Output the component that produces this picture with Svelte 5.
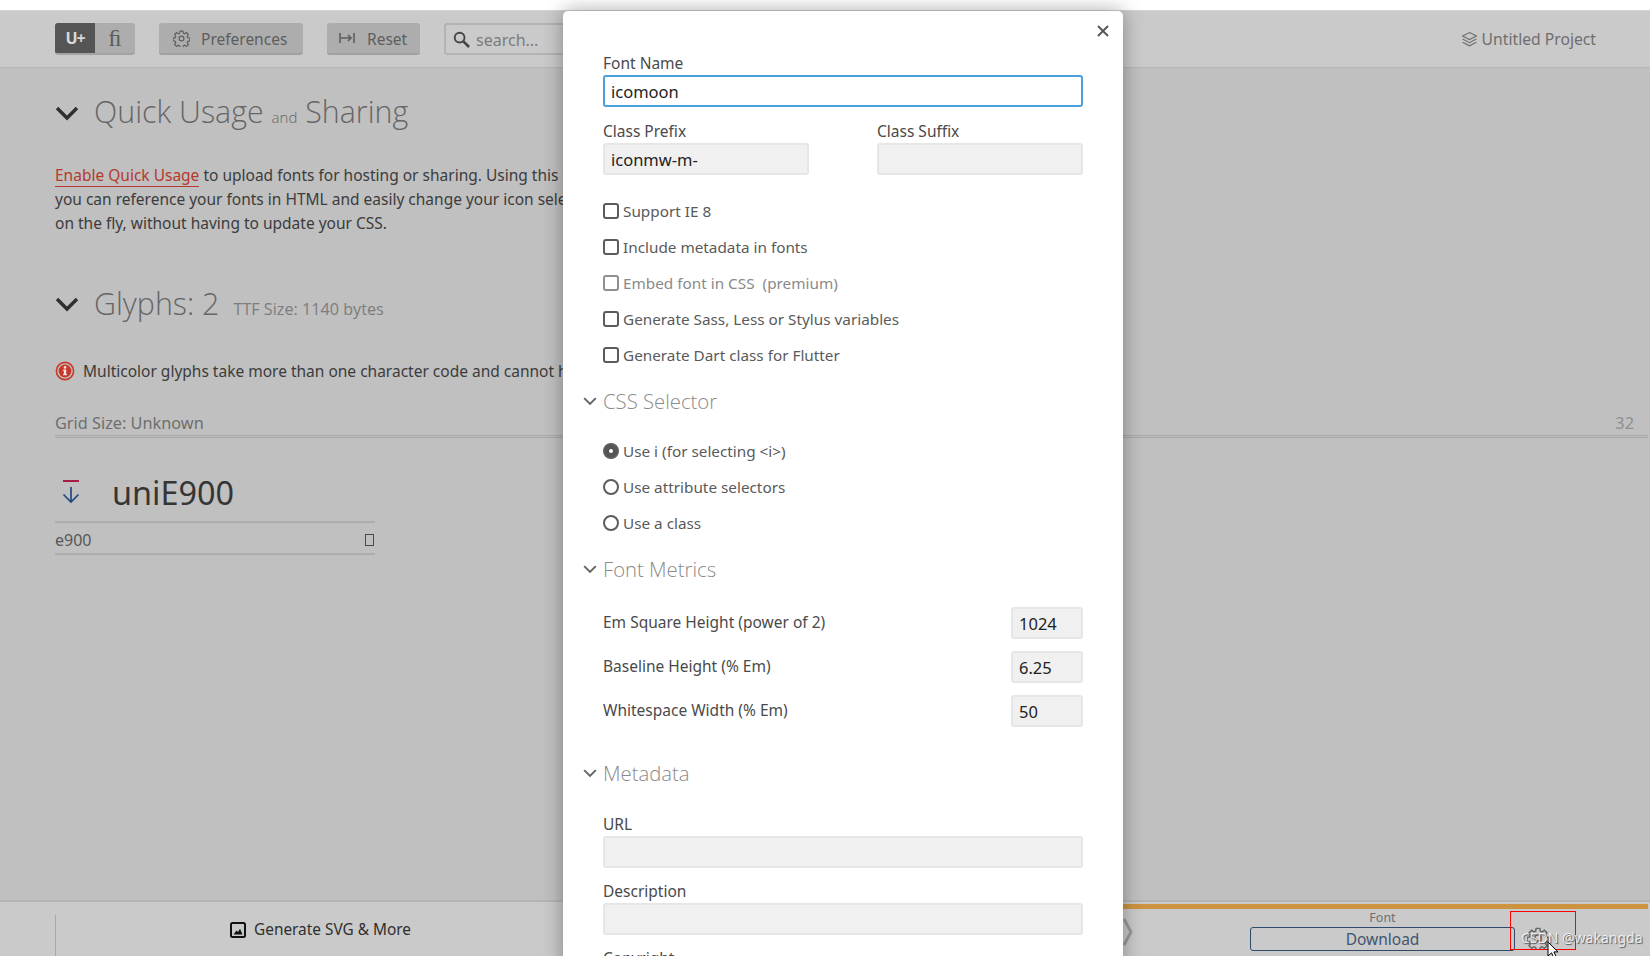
<script>
  const checks = [
    { label: 'Support IE 8' },
    { label: 'Include metadata in fonts' },
    { label: 'Embed font in CSS', extra: '(premium)', off: true },
    { label: 'Generate Sass, Less or Stylus variables' },
    { label: 'Generate Dart class for Flutter' }
  ];
  const radios = [
    { label: 'Use i (for selecting <i>)', on: true },
    { label: 'Use attribute selectors' },
    { label: 'Use a class' }
  ];
  const metrics = [
    { label: 'Em Square Height (power of 2)', value: '1024' },
    { label: 'Baseline Height (% Em)', value: '6.25' },
    { label: 'Whitespace Width (% Em)', value: '50' }
  ];
</script>

{#snippet chevron(cls)}
  <svg class={cls} viewBox="0 0 24 16" aria-hidden="true"><path d="M2 3 L12 13 L22 3" fill="none" stroke="currentColor" stroke-width="3.4"/></svg>
{/snippet}

{#snippet gear(cls)}
  <svg class={cls} viewBox="0 0 24 24" aria-hidden="true" fill="none" stroke="currentColor" stroke-width="1.6">
    <circle cx="12" cy="12" r="3.4"/>
    <path d="M10 1.5h4l.6 3 1.9.8 2.5-1.7 2.8 2.8-1.7 2.5.8 1.9 3 .6v4l-3 .6-.8 1.9 1.7 2.5-2.8 2.8-2.5-1.7-1.9.8-.6 3h-4l-.6-3-1.9-.8-2.5 1.7-2.8-2.8 1.7-2.5-.8-1.9-3-.6v-4l3-.6.8-1.9-1.7-2.5 2.8-2.8 2.5 1.7 1.9-.8z"/>
  </svg>
{/snippet}

<div class="page">
  <header class="topbar">
    <div class="seg">
      <span class="seg-a">U+</span><span class="seg-b">ﬁ</span>
    </div>
    <button class="tool pref">{@render gear('ic-gear')}<span>Preferences</span></button>
    <button class="tool reset">
      <svg class="ic-reset" viewBox="0 0 16 12" aria-hidden="true" fill="none" stroke="currentColor" stroke-width="1.6"><path d="M1 1v10M15 1v10M2 6h10M9 3l3 3-3 3"/></svg>
      <span>Reset</span>
    </button>
    <div class="search">
      <svg class="ic-search" viewBox="0 0 18 18" aria-hidden="true" fill="none" stroke="currentColor"><circle cx="7" cy="7" r="5.2" stroke-width="2"/><path d="M11 11l6 6" stroke-width="2.8"/></svg>
      <span>search...</span>
    </div>
    <div class="project">
      <svg class="ic-layers" viewBox="0 0 16 16" aria-hidden="true" fill="none" stroke="currentColor" stroke-width="1.1"><path d="M8 1.5l6.5 3.2L8 8 1.5 4.7zM1.5 7.6L8 11l6.5-3.4M1.5 10.6L8 14l6.5-3.4"/></svg>
      <span>Untitled Project</span>
    </div>
  </header>

  <main class="content">
    <section class="quick">
      <h2 class="big">{@render chevron('chev-lg')}<span>Quick Usage <small>and</small> Sharing</span></h2>
      <p><a href="#top">Enable Quick Usage</a> to upload fonts for hosting or sharing. Using this font,<br/>you can reference your fonts in HTML and easily change your icon selection<br/>on the fly, without having to update your CSS.</p>
    </section>

    <section class="glyphs">
      <h2 class="big">{@render chevron('chev-lg')}<span>Glyphs: 2</span><em>TTF Size: 1140 bytes</em></h2>
      <div class="alert">
        <svg class="ic-info" viewBox="0 0 20 20" aria-hidden="true"><circle cx="10" cy="10" r="8.6" fill="none" stroke="#c8392b" stroke-width="1.6"/><circle cx="10" cy="10" r="6.4" fill="#c8392b"/><rect x="8.8" y="8.8" width="2.4" height="5" fill="#e8e8e8"/><rect x="8" y="13" width="4" height="1.2" fill="#e8e8e8"/><rect x="8" y="8.6" width="3" height="1.1" fill="#e8e8e8"/><circle cx="10" cy="6.4" r="1.3" fill="#e8e8e8"/></svg>
        <span>Multicolor glyphs take more than one character code and cannot have ligatures.</span>
      </div>
      <div class="grid-head"><span>Grid Size: Unknown</span><span class="grid-num">32</span></div>
      <div class="glyph-title">
        <svg class="ic-glyph" viewBox="0 0 20 24" aria-hidden="true"><rect x="2" y="0" width="16" height="2" fill="#a51c45"/><path d="M10 7v15M2.5 14.5L10 22l7.5-7.5" fill="none" stroke="#1f4a7c" stroke-width="1.7"/></svg>
        <span>uniE900</span>
      </div>
      <div class="glyph-code"><span>e900</span><i></i></div>
    </section>
  </main>

  <footer class="bottom">
    <div class="gen">
      <svg class="ic-image" viewBox="0 0 16 16" aria-hidden="true"><rect x="1" y="1" width="14" height="14" rx="1.5" fill="none" stroke="#111" stroke-width="2"/><path d="M3.5 12.5l3-4 1.6 1.6L10 6.8l2.5 5.7z" fill="#111"/></svg>
      <span>Generate SVG &amp; More</span>
    </div>
    <div class="fontbar">
      <svg class="ic-next" viewBox="0 0 10 30" aria-hidden="true"><path d="M1 2l7 13-7 13" fill="none" stroke="#9a9a9a" stroke-width="3"/></svg>
      <div class="font-col">
        <span class="font-label">Font</span>
        <button class="download">Download</button>
      </div>
      {@render gear('ic-gear2')}
    </div>
  </footer>

  <div class="marker"></div>
  <svg class="cursor" viewBox="0 0 12 18" aria-hidden="true"><path d="M1 1v14l3.5-3.2 2.5 5.4 2.4-1.1-2.5-5.2H11z" fill="#fff" stroke="#000" stroke-width="1"/></svg>
  <span class="watermark">CSDN @wakangda</span>

  <div class="modal" role="dialog">
    <button class="close" aria-label="Close">
      <svg viewBox="0 0 12 12" aria-hidden="true"><path d="M1 1l10 10M11 1L1 11" stroke="currentColor" stroke-width="1.9" fill="none"/></svg>
    </button>
    <label class="fl first">Font Name<input class="focus" value="icomoon" /></label>
    <div class="two">
      <label class="fl">Class Prefix<input value="iconmw-m-" /></label>
      <label class="fl">Class Suffix<input value="" /></label>
    </div>
    <div class="opts">
      {#each checks as c}
        <div class="opt" class:off={c.off}>
          <span class="box"></span><span>{c.label}</span>{#if c.extra}<span class="extra">{c.extra}</span>{/if}
        </div>
      {/each}
    </div>
    <h3>{@render chevron('chev-sm')}<span>CSS Selector</span></h3>
    <div class="opts radios">
      {#each radios as r}
        <div class="opt">
          <span class="radio" class:on={r.on}></span><span>{r.label}</span>
        </div>
      {/each}
    </div>
    <h3 class="fm">{@render chevron('chev-sm')}<span>Font Metrics</span></h3>
    <div class="metrics">
      {#each metrics as m}
        <div class="metric"><span>{m.label}</span><input value={m.value} /></div>
      {/each}
    </div>
    <h3 class="md">{@render chevron('chev-sm')}<span>Metadata</span></h3>
    <label class="fl meta">URL<input value="" /></label>
    <label class="fl meta">Description<input value="" /></label>
    <label class="fl meta">Copyright<input value="" /></label>
  </div>
</div>

<style>
  :global(body) { margin: 0; background: #fff; overflow: hidden; }
  .page {
    position: relative;
    width: 1650px; height: 956px;
    padding-top: 10px; box-sizing: border-box;
    display: flex; flex-direction: column;
    overflow: hidden;
    font-family: "Noto Sans", "Open Sans", sans-serif;
    font-size: 15.5px; color: #3c3c3c;
    background: #fff;
  }
  button { font: inherit; border: 0; padding: 0; background: none; color: inherit; }

  .topbar {
    height: 58px; flex: none; box-sizing: border-box;
    display: flex; align-items: center;
    padding-left: 55px;
    background: #cacaca;
    border-top: 1px solid #d2d2d2;
    border-bottom: 1px solid #b5b5b5;
  }
  .seg { display: flex; height: 32px; width: 80px; border-radius: 3px; overflow: hidden; border-bottom: 2px solid #a3a3a3; box-sizing: border-box; background: #adadad; }
  .seg-a { width: 40px; background: #555; color: #d8d8d8; font-weight: 700; display: flex; align-items: center; justify-content: center; font-size: 16px; letter-spacing: -1px; }
  .seg-b { flex: 1; display: flex; align-items: center; justify-content: center; font-family: "Liberation Serif", serif; font-size: 24px; color: #5c5c5c; }
  .tool {
    height: 32px; box-sizing: border-box;
    display: flex; align-items: center;
    background: #adadad; border-bottom: 2px solid #a0a0a0; border-radius: 3px;
    color: #5e5e5e; font-size: 15.5px;
  }
  .tool span { padding-top: 2px; }
  .pref { margin-left: 24px; width: 144px; padding-left: 14px; gap: 11px; }
  .reset { margin-left: 24px; width: 93px; padding-left: 12px; gap: 12px; }
  .ic-gear { width: 17px; height: 17px; }
  .ic-reset { width: 16px; height: 12px; }
  .search {
    margin-left: 24px; width: 200px; height: 32px; box-sizing: border-box;
    display: flex; align-items: center; gap: 6px; padding-left: 7px;
    border: 2px solid #b3b3b3; border-radius: 3px; color: #7c7c7c; font-size: 16px;
  }
  .search span { padding-top: 2px; }
  .ic-search { width: 17px; height: 17px; color: #444; }
  .project { margin-left: auto; margin-right: 54px; display: flex; align-items: center; gap: 4px; color: #6f6f6f; font-size: 15.7px; }
  .ic-layers { width: 17px; height: 17px; }

  .content { flex: 1; min-height: 0; background: #c0c0c0; padding: 0 2px 0 55px; position: relative; box-shadow: inset 0 -1px 0 #b5b5b5; }
  .big {
    margin: 0; display: flex; align-items: center;
    font-weight: 300; font-size: 30.4px; line-height: 40px; color: #666;
    font-family: "Open Sans", sans-serif;
  }
  .big small { font-size: 15px; }
  .big em { font-style: normal; font-size: 16.2px; color: #7c7c7c; margin-left: 14px; font-weight: 400; padding-top: 10px; }
  .chev-lg { width: 24px; height: 16px; color: #2f2f2f; margin-right: 15px; flex: none; }
  .quick .chev-lg { margin-top: -4px; }
  .quick { padding-top: 24px; }
  .quick p { margin: 26px 0 0; line-height: 24px; }
  .quick a { color: #b5392c; text-decoration: none; border-bottom: 1px solid #b5392c; }
  .glyphs { padding-top: 44px; }
  .alert { margin-top: 30px; display: flex; align-items: center; gap: 8px; height: 24px; }
  .ic-info { width: 20px; height: 20px; }
  .grid-head {
    margin-top: 28px; display: flex; justify-content: space-between;
    color: #6f6f6f; font-size: 16.3px; padding-right: 14px; height: 27px; line-height: 24px;
    box-sizing: border-box;
    border-bottom: 3px double #a8a8a8;
  }
  .grid-num { color: #8f8f8f; }
  .glyph-title { margin-top: 29px; display: flex; align-items: center; font-size: 32.4px; line-height: 50px; color: #353535; }
  .ic-glyph { width: 20px; height: 24px; margin: 0 31px 0 6px; }
  .glyph-code {
    width: 320px; margin-top: 4px; height: 34px; box-sizing: border-box; padding-top: 3px;
    border-top: 2px solid #adadad; border-bottom: 2px solid #adadad;
    display: flex; align-items: center; justify-content: space-between;
    color: #575757; font-size: 16px;
  }
  .glyph-code i { width: 7px; height: 10px; border: 1px solid #4a4a4a; margin-right: 1px; }

  .bottom { height: 55px; flex: none; background: #cacaca; display: flex; box-sizing: border-box; border-top: 1px solid #b2b2b2; }
  .gen { margin: 13px 0 0 55px; padding: 3px 0 0 174px; border-left: 1px solid #a8a8a8; display: flex; gap: 8px; align-items: flex-start; color: #2f2f2f; font-size: 15.4px; line-height: 24px; height: 39px; width: 340px; }
  .ic-image { width: 16px; height: 16px; margin-top: 4px; }
  .fontbar { margin-left: auto; width: 525px; flex: none; position: relative; display: flex; margin-top: 2px; margin-right: 2px; border-top: 5px solid #cc9440; }
  .ic-next { position: absolute; left: 0; top: 8px; width: 10px; height: 30px; }
  .font-col { margin-left: 127px; width: 265px; display: flex; flex-direction: column; align-items: center; }
  .font-label { font-size: 12.5px; line-height: 18px; color: #707070; }
  .download { width: 265px; height: 24px; border: 1px solid #2d4a6b; border-radius: 3px; color: #3f5670; font-size: 15.5px; line-height: 20px; box-sizing: border-box; }
  .ic-gear2 { width: 22px; height: 22px; color: #666; margin: 18px 0 0 12px; }

  .marker { position: absolute; left: 1510px; top: 911px; width: 66px; height: 39px; border: 1px solid #f00; box-sizing: border-box; }
  .cursor { position: absolute; left: 1547px; top: 941px; width: 12px; height: 18px; }
  .watermark { position: absolute; left: 1521px; top: 928px; white-space: nowrap; font-size: 14px; line-height: 20px; color: rgba(255,255,255,.8); text-shadow: 1px 1px 1px rgba(50,50,50,.75); }

  .modal {
    position: absolute; left: 563px; top: 11px; width: 560px; height: 960px;
    box-sizing: border-box; padding: 0 40px;
    background: #fff; border-radius: 5px 5px 0 0;
    box-shadow: 0 0 20px rgba(0,0,0,.35);
  }
  .close { position: absolute; right: 14px; top: 14px; width: 12px; height: 12px; color: #555; display: block; }
  .close svg { display: block; width: 12px; height: 12px; }
  .fl { display: flex; flex-direction: column; font-size: 15.5px; line-height: 23px; color: #4a4a4a; }
  .fl.first { padding-top: 41px; }
  input {
    font: inherit; font-size: 16.5px; color: #222; box-sizing: border-box;
    height: 32px; width: 100%; margin: 0; padding: 0 6px; display: block;
    background: #f0f0f0; border: 2px solid #e6e6e6; border-radius: 3px; outline: 0;
  }
  input.focus { background: #fff; border-color: #4a9fdc; }
  .two { margin-top: 13px; display: grid; grid-template-columns: 206px 206px; justify-content: space-between; }
  .opts { margin-top: 18px; display: flex; flex-direction: column; font-size: 15.3px; }
  .opt { height: 36px; display: flex; align-items: center; color: #5a5a5a; }
  .opt.off { color: #8a8a8a; }
  .extra { margin-left: 8px; }
  .box { width: 16px; height: 16px; box-sizing: border-box; border: 2px solid #5c5c5c; border-radius: 3px; margin-right: 4px; flex: none; }
  .off .box { border-color: #909090; }
  .radio { width: 16px; height: 16px; box-sizing: border-box; border: 2px solid #5c5c5c; border-radius: 50%; margin-right: 4px; flex: none; }
  .radio.on { background: #555; position: relative; }
  .radio.on::after { content: ""; position: absolute; left: 4px; top: 4px; width: 4px; height: 4px; background: #fff; border-radius: 50%; }
  h3 {
    margin: 0 0 0 -20px; display: flex; align-items: center; gap: 6px;
    font-family: "Open Sans", sans-serif; font-weight: 300; font-size: 20.3px; line-height: 30px; color: #8a8a8a;
  }
  .opts + h3 { margin-top: 13px; }
  .chev-sm { width: 14px; height: 10px; color: #666; flex: none; }
  .radios { margin-top: 17px; }
  .metrics { margin-top: 23px; display: flex; flex-direction: column; gap: 12px; }
  .metric { display: flex; justify-content: space-between; align-items: center; color: #4a4a4a; height: 32px; }
  .metric span { padding-bottom: 2px; }
  .metric input { width: 72px; }
  h3.md { margin-top: 31px; }
  .meta { margin-top: 12px; }
  h3.md + .meta { margin-top: 25px; }
</style>
